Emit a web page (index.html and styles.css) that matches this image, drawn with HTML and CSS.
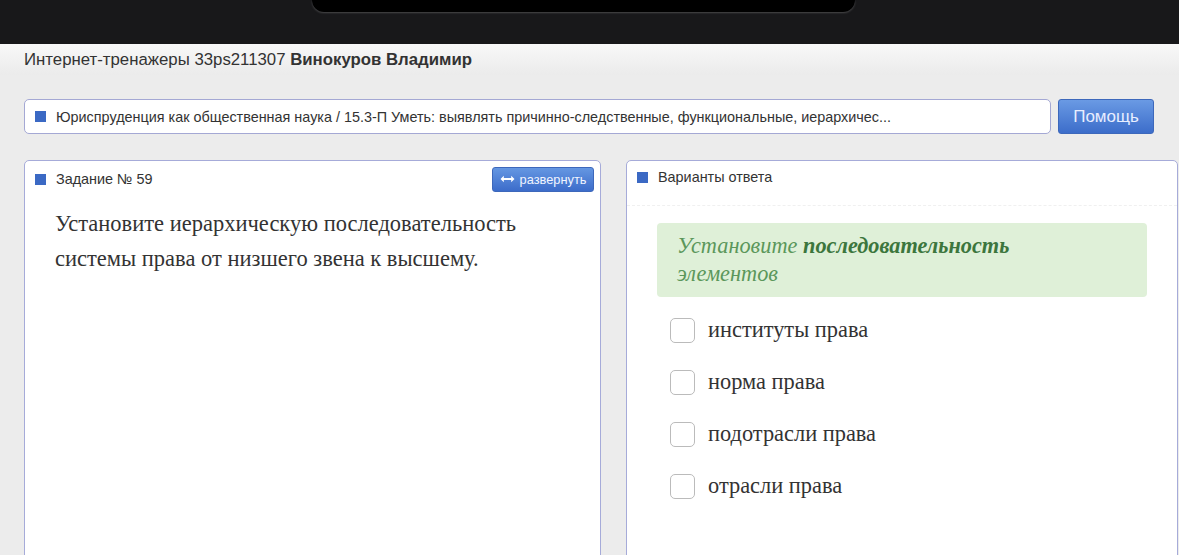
FILE: index.html
```html
<!DOCTYPE html>
<html lang="ru">
<head>
  <meta charset="UTF-8">
  <meta name="viewport" content="width=device-width, initial-scale=1.0">
  <title>Интернет-тренажеры</title>
  <link rel="stylesheet" href="styles.css">
</head>
<body>
  <div class="statusbar">
    <div class="notch"></div>
  </div>

  <div class="topbar">
    Интернет-тренажеры 33ps211307 <b>Винокуров Владимир</b>
  </div>

  <div class="topic-row">
    <div class="topic">
      <span class="marker"></span>
      Юриспруденция как общественная наука / 15.3-П Уметь: выявлять причинно-следственные, функциональные, иерархичес...
    </div>
    <button class="help-btn">Помощь</button>
  </div>

  <div class="panels">
    <div class="panel">
      <div class="panel-head">
        <span class="marker"></span>
        <span class="panel-title">Задание № 59</span>
        <button class="expand-btn">
          <svg width="15" height="8" viewBox="0 0 15 8"><path d="M0.5 4 L3.8 0.8 L3.8 3 L11.2 3 L11.2 0.8 L14.5 4 L11.2 7.2 L11.2 5 L3.8 5 L3.8 7.2 Z" fill="#fff"/></svg>
          развернуть
        </button>
      </div>
      <div class="question">
        Установите иерархическую последовательность системы права от низшего звена к высшему.
      </div>
    </div>

    <div class="panel">
      <div class="panel-head with-line">
        <span class="marker"></span>
        <span class="panel-title">Варианты ответа</span>
      </div>
      <div class="answers">
        <div class="hint">Установите <b>последовательность</b><br>элементов</div>
        <ul class="options">
          <li><span class="check"></span>институты права</li>
          <li><span class="check"></span>норма права</li>
          <li><span class="check"></span>подотрасли права</li>
          <li><span class="check"></span>отрасли права</li>
        </ul>
      </div>
    </div>
  </div>
</body>
</html>
```

FILE: styles.css
```css
body {
  margin: 0;
  font-family: "Liberation Sans", Arial, sans-serif;
  background: #ececec;
  color: #333;
  overflow: hidden;
}
.statusbar {
  height: 44px;
  background: #18181a;
}
.notch {
  margin-left: 312px;
  width: 543px;
  height: 12px;
  background: #000;
  border-radius: 0 0 24px 24px;
  box-shadow: 0 1px 2px #48484a;
}
.topbar {
  height: 31px;
  line-height: 31px;
  padding-left: 24px;
  font-size: 16.8px;
  background: linear-gradient(#f8f8f8, #ebebeb);
  color: #333;
}
.topic-row {
  display: flex;
  gap: 7px;
  margin: 24px 25px 0 24px;
}
.topic {
  flex: 1;
  height: 33px;
  display: flex;
  align-items: center;
  background: white;
  border: 1px solid #a4a8d4;
  border-radius: 5px;
  padding-left: 10px;
  font-size: 14.4px;
  white-space: nowrap;
  overflow: hidden;
}
.marker {
  display: inline-block;
  width: 11px;
  height: 11px;
  background: #3b69c4;
  margin-right: 10px;
  flex-shrink: 0;
}
.help-btn {
  width: 96px;
  height: 35px;
  border: 1px solid #3d68bb;
  border-radius: 3px;
  background: linear-gradient(#6a9ae4, #3c6dca);
  color: #e8eeff;
  font-family: inherit;
  font-size: 17px;
  cursor: pointer;
}
.panels {
  display: grid;
  grid-template-columns: 577px 1fr;
  gap: 25px;
  margin: 26px 1px 0 24px;
}
.panel {
  height: 420px;
  background: white;
  border: 1px solid #a6abd9;
  border-radius: 5px 5px 0 0;
}
.panel-head {
  display: flex;
  align-items: center;
  height: 36px;
  padding: 0 6px 0 10px;
  font-size: 14.4px;
}
.panel-head.with-line {
  height: 44px;
  border-bottom: 1px dashed #f0f0f0;
  align-items: flex-start;
}
.panel-head.with-line .marker {
  margin-top: 11px;
}
.panel-head.with-line .panel-title {
  margin-top: 8px;
}
.panel-title {
  flex: 1;
}
.expand-btn {
  display: flex;
  align-items: center;
  gap: 5px;
  width: 102px;
  height: 25px;
  justify-content: center;
  border: 1px solid #3d68bb;
  border-radius: 3px;
  background: linear-gradient(#6597e2, #3c6cca);
  color: #f0f4ff;
  font-family: inherit;
  font-size: 12.8px;
  cursor: pointer;
}
.question {
  padding: 9px 30px;
  font-family: "Liberation Serif", "Times New Roman", serif;
  font-size: 22.5px;
  line-height: 35px;
  color: #333;
}
.answers {
  padding: 17px 30px;
}
.hint {
  background: #dff0d8;
  border-radius: 4px;
  padding: 9px 20px 9px;
  font-family: "Liberation Serif", "Times New Roman", serif;
  font-style: italic;
  font-size: 22.3px;
  line-height: 28px;
  color: #5b975b;
}
.hint b {
  color: #3c763d;
}
.options {
  list-style: none;
  margin: 7px 0 0;
  padding: 0 0 0 13px;
}
.options li {
  display: flex;
  align-items: center;
  height: 52px;
  font-family: "Liberation Serif", "Times New Roman", serif;
  font-size: 22.4px;
  color: #333;
}
.check {
  width: 23px;
  height: 23px;
  border: 1px solid #bbb;
  border-radius: 5px;
  margin-right: 13px;
}
```
